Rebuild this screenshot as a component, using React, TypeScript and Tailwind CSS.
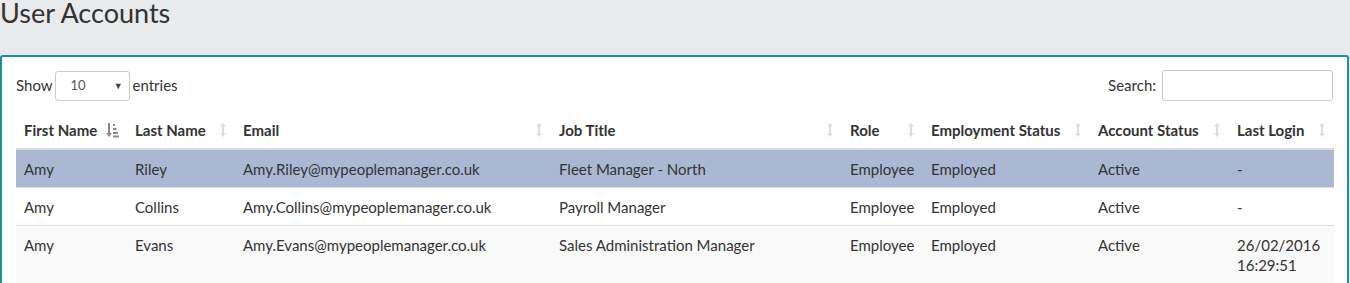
import React from "react";

const SortBoth = () => (
  <svg width="8" height="16" viewBox="0 0 8 16" className="shrink-0">
    <path d="M4 1 L7 4.5 H5 V11.5 H7 L4 15 L1 11.5 H3 V4.5 H1 Z" fill="#dcdcdc" />
  </svg>
);

const SortAsc = () => (
  <svg width="14" height="16" viewBox="0 0 14 16" className="shrink-0">
    <path d="M3 1 H5 V11 H7 L4 15 L1 11 H3 Z" fill="#8a8a8a" />
    <rect x="8" y="2" width="2" height="2" fill="#8a8a8a" />
    <rect x="8" y="6" width="3.5" height="2" fill="#8a8a8a" />
    <rect x="8" y="10" width="5" height="2" fill="#8a8a8a" />
    <rect x="8" y="13.5" width="6" height="2" fill="#8a8a8a" />
  </svg>
);

const cols = [
  { name: "First Name", w: 111, active: true },
  { name: "Last Name", w: 108 },
  { name: "Email", w: 316 },
  { name: "Job Title", w: 291 },
  { name: "Role", w: 81 },
  { name: "Employment Status", w: 167 },
  { name: "Account Status", w: 139 },
  { name: "Last Login", w: 105 },
];

const rows = [
  ["Amy", "Riley", "Amy.Riley@mypeoplemanager.co.uk", "Fleet Manager - North", "Employee", "Employed", "Active", "-"],
  ["Amy", "Collins", "Amy.Collins@mypeoplemanager.co.uk", "Payroll Manager", "Employee", "Employed", "Active", "-"],
  ["Amy", "Evans", "Amy.Evans@mypeoplemanager.co.uk", "Sales Administration Manager", "Employee", "Employed", "Active", "26/02/2016 16:29:51"],
];

const rowBg = ["bg-[#abb8d3]", "bg-white", "bg-[#f9f9f9]"];

export default function App() {
  return (
    <div className="w-[1350px] h-[283px] overflow-hidden bg-[#e9eaeb] text-[#333] font-['Lato','Liberation_Sans',sans-serif]">
      <div className="h-[55px]">
        <h1 className="text-[27px] leading-[25px] font-normal m-0 text-[#333] whitespace-nowrap">User Accounts</h1>
      </div>
      <div className="w-[1349px] bg-white border-2 border-[#1a8fa6] border-b-0 rounded-t-[3px] px-[14px] pt-[13px] pb-4">
        <div className="flex items-center justify-between text-[15px]">
          <div className="flex items-center">
            <span>Show</span>
            <div className="ml-[2px] mr-[3px] w-[75px] h-[30px] border border-[#ccc] rounded-[3px] flex items-center justify-between pl-[15px] pr-[6px] text-[13px] text-[#555]">
              <span>10</span>
              <span className="text-[9px] text-[#444]">▼</span>
            </div>
            <span>entries</span>
          </div>
          <div className="flex items-center">
            <span>Search:</span>
            <div className="ml-[6px] w-[171px] h-[31px] border border-[#ccc] rounded-[3px] bg-white" />
          </div>
        </div>
        <table className="mt-[11px] w-[1318px] table-fixed border-collapse">
          <colgroup>
            {cols.map((c) => (
              <col key={c.name} style={{ width: c.w }} />
            ))}
          </colgroup>
          <thead>
            <tr className="border-b-2 border-[#ddd]">
              {cols.map((c) => (
                <th key={c.name} className="text-left font-bold px-2 py-2 leading-5 text-[15px]">
                  <div className="flex items-center justify-between">
                    <span className="whitespace-nowrap">{c.name}</span>
                    {c.active ? <SortAsc /> : <SortBoth />}
                  </div>
                </th>
              ))}
            </tr>
          </thead>
          <tbody>
            {rows.map((r, i) => (
              <tr key={i} className={`${rowBg[i]} border-t border-[#ddd]`}>
                {r.map((cell, j) => (
                  <td key={j} className="px-2 pt-[9px] pb-2 leading-5 align-top text-[15px]">
                    {cell}
                  </td>
                ))}
              </tr>
            ))}
          </tbody>
        </table>
      </div>
    </div>
  );
}
